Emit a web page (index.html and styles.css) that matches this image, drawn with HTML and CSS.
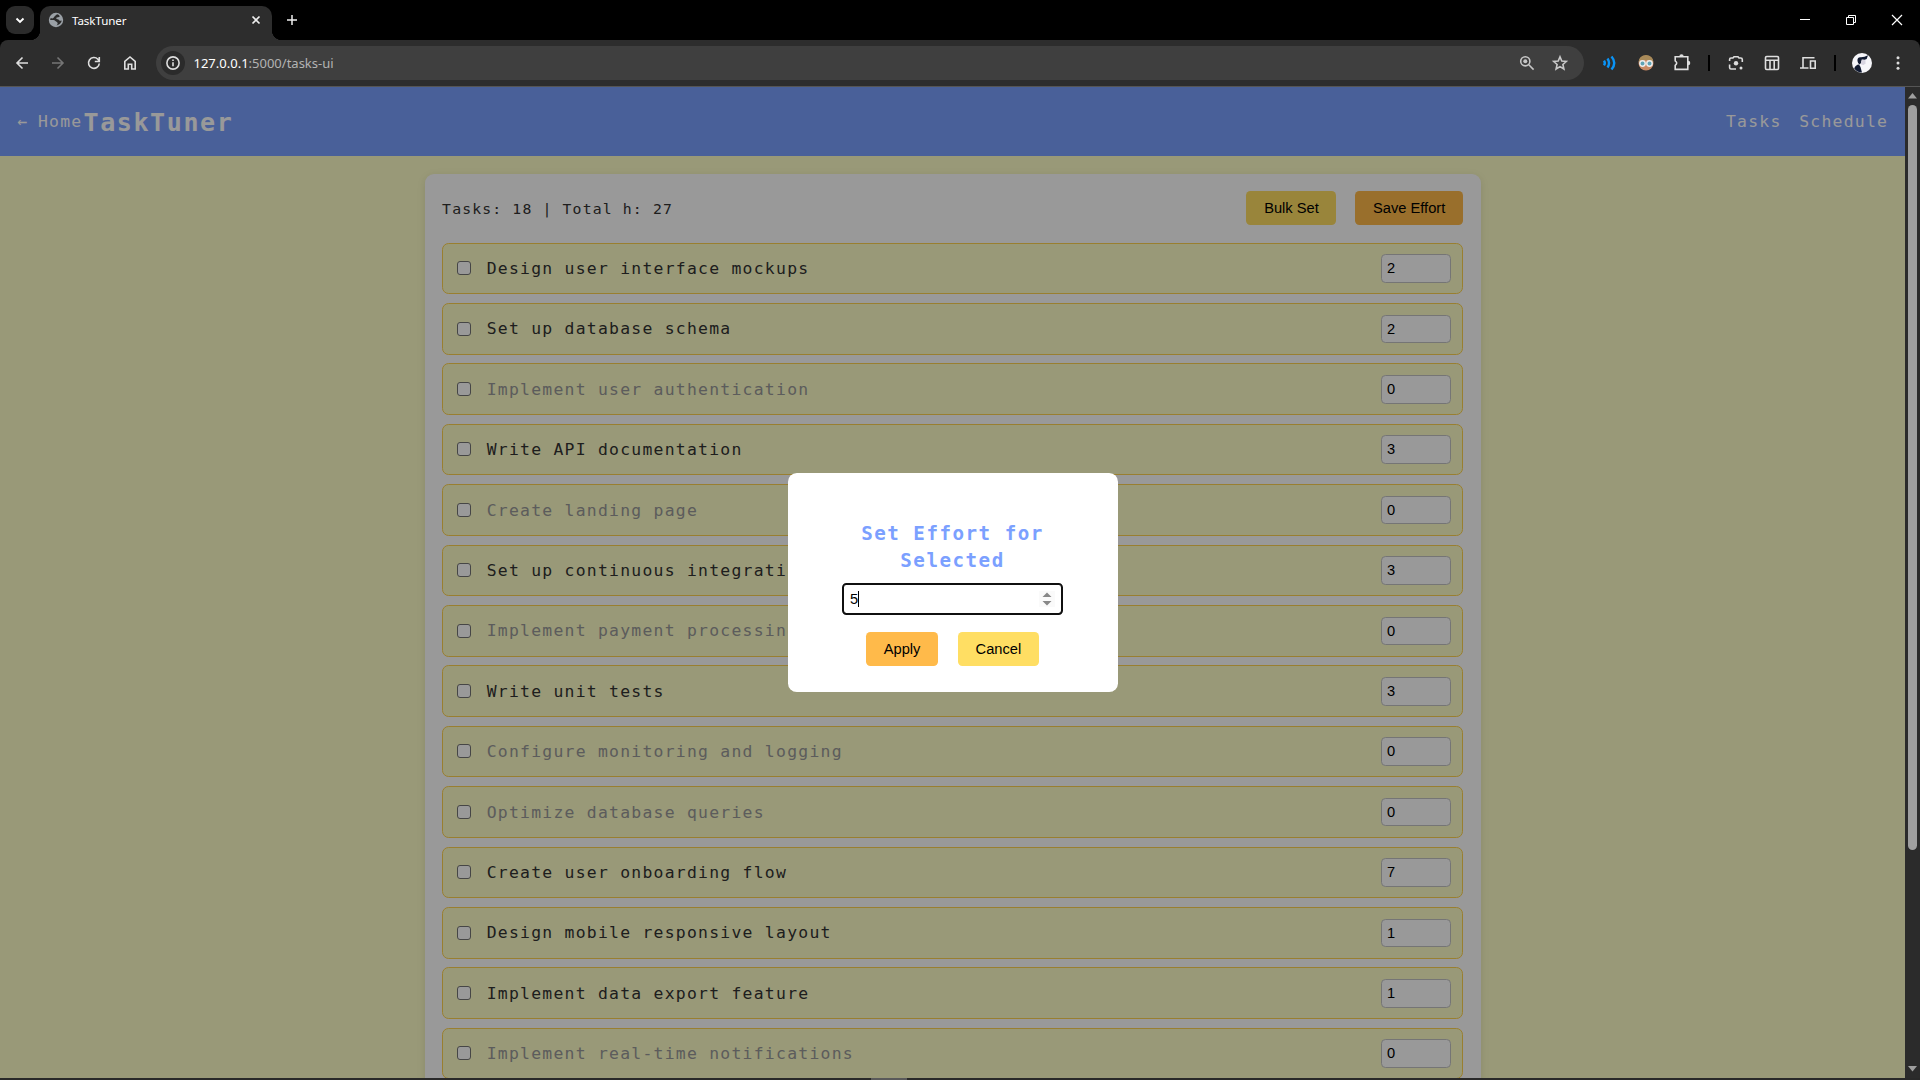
FILE: index.html
```html
<!DOCTYPE html>
<html lang="en">
<head>
<meta charset="utf-8">
<title>TaskTuner</title>
<link rel="stylesheet" href="styles.css">
</head>
<body>
<div class="browser">
  <div class="tabstrip">
    <div class="tab-search"><svg width="28" height="28" viewBox="0 0 28 28"><path d="M10.5 12.5l3.5 3.5 3.500-3.500" fill="none" stroke="#fff" stroke-width="1.9"/></svg></div>
    <div class="tab">
      <svg class="favicon" width="16" height="16" viewBox="0 0 16 16"><circle cx="8" cy="8" r="7.200" fill="#9aa0a6"/><path d="M9 2.200c1.500.3 2.500 1 2.800 2.300-1 1.200-2.600.6-3.800 1.500.3 1.500 2.600.8 3.200 2.200.6.900 1.600.6 2.600.3-.5 2.500-2.500 4.500-5.300 4.900 1-1 1.800-2.300.6-3.200C7.700 9.500 7 8.300 5.500 8H2.200c0-1 .3-1.500.6-2 1 .6 2 .6 2.800-.3C6.200 4.500 7.500 3.500 9 2.200z" fill="#2b2b2b"/></svg>
      <span class="tab-title">TaskTuner</span>
      <svg class="tab-close" width="16" height="16" viewBox="0 0 16 16"><path d="M4.500 4.500l7 7m0-7l-7 7" stroke="#eee" stroke-width="1.700"/></svg>
    </div>
    <svg class="new-tab" width="16" height="16" viewBox="0 0 16 16"><path d="M8 3v10M3 8h10" stroke="#eee" stroke-width="1.500"/></svg>
    <div class="window-buttons">
      <svg width="12" height="12" viewBox="0 0 12 12"><path d="M1 5.500h10" stroke="#fff"/></svg>
      <svg width="12" height="12" viewBox="0 0 12 12"><path d="M1.500 3.500h7v7h-7zM3.500 3V1.500h7v7H9" fill="none" stroke="#fff"/></svg>
      <svg width="12" height="12" viewBox="0 0 12 12"><path d="M1 1l10 10m0-10L1 11" stroke="#fff" stroke-width="1.200"/></svg>
    </div>
  </div>
  <div class="toolbar">
    <div class="nav-icons">
      <svg width="16" height="16" viewBox="0 0 16 16"><path d="M14 8H3m5.500-5.500L3 8l5.500 5.500" class="line"/></svg>
      <svg width="16" height="16" viewBox="0 0 16 16"><path d="M2 8h11M7.500 2.500L13 8l-5.500 5.500" class="line dim"/></svg>
      <svg width="16" height="16" viewBox="0 0 16 16"><path d="M13.300 8.500a5.400 5.400 0 1 1-1.400-4.200L13.200 6M13.300 2v4.500H8.800" class="line"/></svg>
      <svg width="16" height="16" viewBox="0 0 16 16"><path d="M2.800 14V6.300L8 2l5.200 4.300V14H9.700V9.200H6.300V14z" class="line"/></svg>
    </div>
    <div class="omnibox">
      <span class="info"><svg width="16" height="16" viewBox="0 0 16 16"><circle cx="8" cy="8" r="6.100" class="line"/><path d="M8 7.200v4M8 4.500v1.600" class="line"/></svg></span>
      <span class="url"><b>127.0.0.1</b>:5000/tasks-ui</span>
      <svg class="magnify" width="16" height="16" viewBox="0 0 16 16"><circle cx="6.300" cy="6.300" r="4.600" class="line soft"/><circle cx="6.300" cy="6.300" r="2" fill="#c7c7c7"/><path d="M9.800 9.800l4.800 4.800" class="line soft"/></svg>
      <svg width="16" height="16" viewBox="0 0 16 16"><path d="M8 1.900l1.800 4.200 4.500.4-3.400 3 1 4.500L8 11.600 4.100 14l1-4.500-3.400-3 4.500-.4z" class="line soft"/></svg>
    </div>
    <div class="extensions">
      <svg width="16" height="16" viewBox="0 0 16 16"><path d="M2 5.600Q3.600 8 2 10.400M5.500 3.500Q8.600 8 5.500 12.500M9.500 1.500Q15 8 9.500 14.500" fill="none" stroke="#0a93f5" stroke-width="2.400"/></svg>
      <svg width="16" height="16" viewBox="0 0 16 16"><circle cx="8" cy="8" r="7.500" fill="#c98a64"/><path d="M.5 7a7.500 7 0 0 1 15 0L12 5H4z" fill="#a88a59"/><circle cx="4.500" cy="8.500" r="2.700" fill="#5fa3b5" stroke="#eee" stroke-width="1.400"/><circle cx="11.500" cy="8.500" r="2.700" fill="#5fa3b5" stroke="#eee" stroke-width="1.400"/></svg>
      <svg width="16" height="16" viewBox="0 0 16 16"><path d="M1.200 1.800h12.600v12.600H1.200v-4q3-2.300 0-4.600z" class="line"/><path d="M5.300 1.500q0-2.300 2.200-2.300t2.200 2.300zM14 5.800q2.300 0 2.300 2.300T14 10.300z" fill="#dedede"/></svg>
      <i class="separator"></i>
      <svg width="16" height="16" viewBox="0 0 16 16"><path d="M1.600 6V4.500Q1.600 3 3 3h2l1-1.200h4L11 3h1.800q1.500 0 1.500 1.500V7M1.600 9.500v3Q1.600 14 3 14h5" class="line"/><circle cx="8" cy="8.200" r="2.200" fill="#ddd"/><circle cx="13" cy="13" r="1.500" fill="#ddd"/></svg>
      <svg width="16" height="16" viewBox="0 0 16 16"><rect x="1.500" y="1.500" width="13" height="13" rx="1.200" class="line"/><path d="M2 5.300h12M6 5.500V14M10.200 5.500V14" class="line"/></svg>
      <svg width="16" height="16" viewBox="0 0 16 16"><path d="M14.500 2.800H3v10M0 13h8.500M10.500 6h4.700v7.300h-4.700z" class="line"/></svg>
      <i class="separator"></i>
      <svg class="avatar" width="20" height="20" viewBox="0 0 20 20"><circle cx="10" cy="10" r="10" fill="#f6f6fa"/><path d="M2.200 15.500Q3.500 11.800 7 11.500l1.500 2.500 1.500 5.500Q5 19.500 2.200 15.500zM5.500 8Q5 3.800 9 4.200l3.500-.4 3.500-1.500-1.300 3.700-2 .8-3-.3-.7 3.500-1.500 1.500Q5.800 10.500 5.500 8z" fill="#111a31"/><path d="M9 8.500l1.500-1.800 3 .6v3l-1.700 1.800-2.600-.6z" fill="#d8d5e2"/></svg>
      <svg width="16" height="16" viewBox="0 0 16 16"><g fill="#ddd"><circle cx="8" cy="2.700" r="1.500"/><circle cx="8" cy="8" r="1.500"/><circle cx="8" cy="13.300" r="1.500"/></g></svg>
    </div>
  </div>
</div>
<div class="viewport">
  <div class="page">
    <header class="site-header">
      <div class="brand"><a class="home"><span class="arrow">←</span>Home</a><h1>TaskTuner</h1></div>
      <nav><a>Tasks</a><a>Schedule</a></nav>
    </header>
    <main class="card">
      <div class="summary"><span>Tasks: 18 | Total h: 27</span><div class="actions"><button class="btn yellow">Bulk Set</button><button class="btn orange">Save Effort</button></div></div>
      <ul class="tasks">
        <li><i class="check"></i><span>Design user interface mockups</span><b class="hours">2</b></li>
        <li><i class="check"></i><span>Set up database schema</span><b class="hours">2</b></li>
        <li class="done"><i class="check"></i><span>Implement user authentication</span><b class="hours">0</b></li>
        <li><i class="check"></i><span>Write API documentation</span><b class="hours">3</b></li>
        <li class="done"><i class="check"></i><span>Create landing page</span><b class="hours">0</b></li>
        <li><i class="check"></i><span>Set up continuous integration</span><b class="hours">3</b></li>
        <li class="done"><i class="check"></i><span>Implement payment processing</span><b class="hours">0</b></li>
        <li><i class="check"></i><span>Write unit tests</span><b class="hours">3</b></li>
        <li class="done"><i class="check"></i><span>Configure monitoring and logging</span><b class="hours">0</b></li>
        <li class="done"><i class="check"></i><span>Optimize database queries</span><b class="hours">0</b></li>
        <li><i class="check"></i><span>Create user onboarding flow</span><b class="hours">7</b></li>
        <li><i class="check"></i><span>Design mobile responsive layout</span><b class="hours">1</b></li>
        <li><i class="check"></i><span>Implement data export feature</span><b class="hours">1</b></li>
        <li class="done"><i class="check"></i><span>Implement real-time notifications</span><b class="hours">0</b></li>
      </ul>
    </main>
    <div class="overlay">
      <div class="modal">
        <h3>Set Effort for Selected</h3>
        <div class="field"><span class="value">5</span><svg width="16" height="16" viewBox="0 0 16 16"><path fill="#fafafa" d="M0 0h16v16H0z"/><path d="M3.500 6L8 1.500 12.500 6zM3.500 10L8 14.500 12.500 10z" fill="#888"/></svg></div>
        <div class="modal-actions"><button class="btn orange">Apply</button><button class="btn yellow">Cancel</button></div>
      </div>
    </div>
  </div>
  <div class="scrollbar"><svg width="15" height="18" viewBox="0 0 15 18"><path d="M3 11.500L7.500 6 12 11.500z" fill="#9f9f9f"/></svg><div class="thumb"></div><svg class="down" width="15" height="18" viewBox="0 0 15 18"><path d="M3 6L7.500 11.500 12 6z" fill="#9f9f9f"/></svg></div>
</div>
<div class="bottom-edge"><i></i></div>
</body>
</html>
```
FILE: styles.css
```css
* { box-sizing: border-box; }
body { margin: 0; width: 1920px; height: 1080px; overflow: hidden; display: flex; flex-direction: column; background: #2b2b2b; font-family: "DejaVu Sans Mono", monospace; }
svg { display: block; flex: none; overflow: visible; }
.line { fill: none; stroke: #dedede; stroke-width: 1.6; }
.line.dim { stroke: #757575; }
.line.soft { stroke: #c7c7c7; }

.browser { height: 87px; flex: none; background: #000; border-bottom: 1px solid #555; font-family: "Noto Sans", sans-serif; }
.tabstrip { height: 40px; display: flex; align-items: flex-end; padding-left: 6px; }
.tab-search { width: 28px; height: 28px; border-radius: 9px; background: #2b2b2b; margin-bottom: 6px; }
.tab { position: relative; width: 232px; height: 34px; margin-left: 6px; padding: 0 8px; display: flex; align-items: center; background: #2d2d2d; border-radius: 10px 10px 0 0; }
.tab::before, .tab::after { content: ""; position: absolute; bottom: 0; width: 10px; height: 10px; }
.tab::before { left: -10px; background: radial-gradient(circle at 0 0, transparent 10px, #2d2d2d 10.5px); }
.tab::after { right: -10px; background: radial-gradient(circle at 100% 0, transparent 10px, #2d2d2d 10.5px); }
.favicon { margin-bottom: 6px; }
.tab-title { margin: 0 auto 5px 8px; font-size: 11.6px; line-height: 16px; letter-spacing: -0.1px; color: #fff; }
.tab-close { margin-bottom: 6px; }
.new-tab { margin: 0 0 12px 12px; }
.window-buttons { display: flex; gap: 34px; margin: 0 17px 14px auto; }
.toolbar { height: 46px; display: flex; align-items: center; background: #2d2d2d; border-radius: 8px 8px 0 0; }
.nav-icons { display: flex; gap: 20px; padding-left: 14px; }
.omnibox { width: 1428px; height: 34px; margin-left: 18px; padding: 0 16px 0 5px; display: flex; align-items: center; gap: 17px; border-radius: 17px; background: #3f3f3f; }
.info { width: 24px; height: 24px; display: grid; place-items: center; border-radius: 50%; background: #2b2b2b; }
.url { margin: 0 auto 0 -8.5px; font-size: 13px; line-height: 20px; color: #b3b3b3; }
.url b { font-weight: 400; color: #fff; }
.extensions { display: flex; align-items: center; gap: 20px; padding-left: 18px; }
.separator { width: 2px; height: 16px; margin: 0 -2px; background: #000; }
.avatar { margin: 0 -2px; }

.viewport { height: 991px; flex: none; display: flex; }
.page { position: relative; width: 1905px; overflow: hidden; background: #ffffc8; color: #333; font-size: 16.4px; letter-spacing: 1.26px; }
.site-header { height: 69px; padding: 0 16.8px 0 17.6px; display: flex; align-items: center; justify-content: space-between; background: #7ba0ff; color: #fff; }
.brand { display: flex; align-items: center; }
.home { display: flex; align-items: center; }
.arrow { width: 20.4px; }
h1 { margin: 0 0 -2px 1px; font-size: 25px; letter-spacing: 1.6px; line-height: 32px; }
nav { display: flex; gap: 17.6px; }
.card { width: 1056px; margin: 18px auto 0; padding: 17px 17.6px; background: #fff; border-radius: 9px; box-shadow: 0 2px 9px rgba(0, 0, 0, 0.1); }
.summary { height: 34px; margin-bottom: 17.6px; display: flex; align-items: center; justify-content: space-between; font-size: 14.8px; letter-spacing: 1.13px; }
.actions { display: flex; gap: 19px; }
.actions .yellow { width: 90px; padding: 0; }
.btn { height: 34px; padding: 0 17.6px; border: 0; border-radius: 4.4px; color: #000; font: 14.67px "Liberation Sans", sans-serif; white-space: nowrap; }
.yellow { background: #ffde63; }
.orange { background: #ffba4a; }
.tasks { margin: 0; padding: 0; list-style: none; display: flex; flex-direction: column; gap: 8.8px; }
.tasks li { height: 51.62px; flex: none; padding: 0 11px 0 14.2px; display: flex; align-items: center; border: 1px solid #ffd450; border-radius: 6.6px; background: #ffffc8; }
.tasks span { margin: 0 auto 0 15.4px; }
.done span { color: #999; }
.check { width: 14px; height: 14px; margin-bottom: 0.6px; border: 1px solid #767676; border-radius: 3px; background: #fff; }
.hours { width: 70px; height: 28.6px; padding-left: 5.2px; border: 1px solid #c4c4c4; border-radius: 4.4px; background: #fff; color: #000; font: 400 14.67px/26px "Liberation Sans", sans-serif; letter-spacing: 0; }

.overlay { position: absolute; inset: 0; display: flex; align-items: center; justify-content: center; background: rgba(0, 0, 0, 0.4); }
.modal { width: 330px; height: 219px; padding: 47px 54px 26px; display: flex; flex-direction: column; align-items: center; background: #fff; border-radius: 8.8px; }
h3 { margin: 0; text-align: center; font-size: 19.2px; line-height: 27px; letter-spacing: 1.5px; color: #7ba0ff; }
.field { width: 221px; height: 32px; margin: 9px 0 17px; padding: 0 6px; display: flex; align-items: center; justify-content: space-between; border: 2px solid #101010; border-radius: 4.4px; color: #000; font: 14.67px "Liberation Sans", sans-serif; letter-spacing: 0; }
.value { border-right: 1px solid #000; line-height: 16px; }
.modal-actions { display: flex; gap: 20px; }
.scrollbar { width: 15px; display: flex; flex-direction: column; align-items: center; background: #2b2b2b; }
.thumb { width: 9px; height: 745px; border-radius: 5px; background: #9f9f9f; }
.down { margin-top: auto; }
.bottom-edge { height: 2px; padding-left: 871px; background: #292929; }
.bottom-edge i { display: block; width: 36px; height: 2px; background: #5a5a5a; }
```
